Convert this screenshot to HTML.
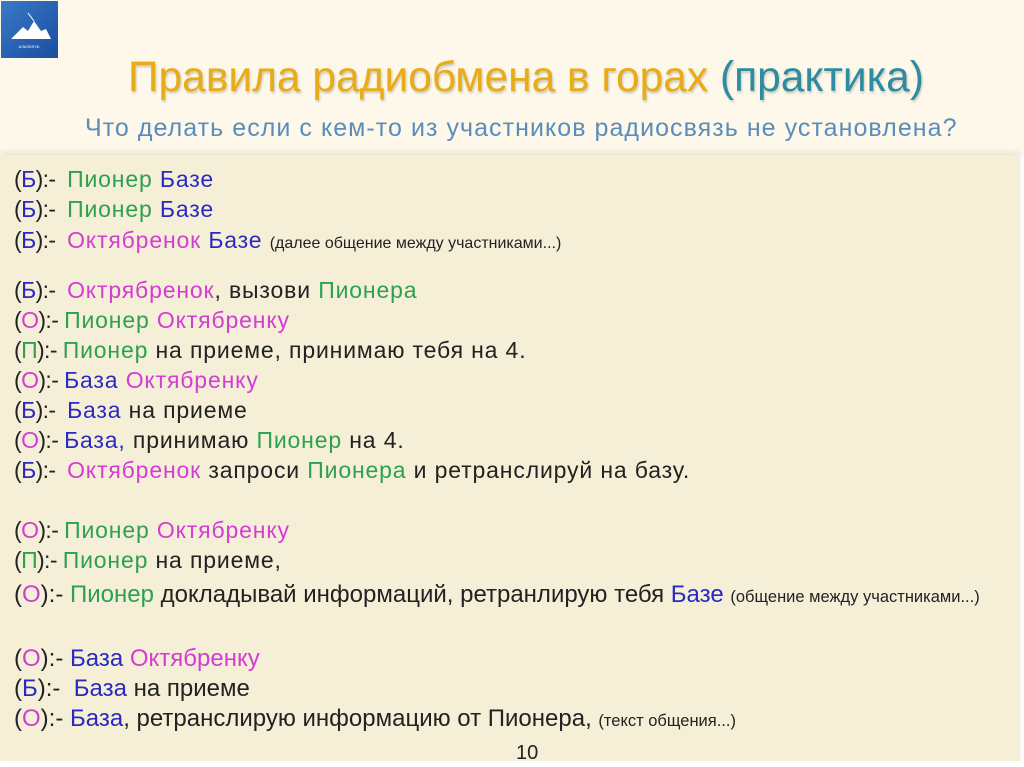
<!DOCTYPE html>
<html><head><meta charset="utf-8"><style>
body{margin:0;width:1024px;height:767px;overflow:hidden;background:#fff;font-family:"Liberation Sans",sans-serif;position:relative}
.top{position:absolute;left:0;top:0;width:1024px;height:155px;background:#fdf8e9}
.main{position:absolute;left:0;top:155px;width:1020px;height:606px;background:#f5efd8;box-shadow:0 -3px 6px rgba(0,0,0,0.08)}
.logo{position:absolute;left:1px;top:1px;width:57px;height:57px;background:linear-gradient(135deg,#3a78c8,#1a4ea0)}
.t{position:absolute;left:128px;top:54px;font-size:42.5px;color:#e8ac18;white-space:nowrap;text-shadow:1px 2px 2px rgba(0,0,0,0.2)}
.t span{color:#2e8ca0}
.s{position:absolute;left:85px;top:114px;font-size:25px;letter-spacing:1.05px;color:#5a8cbc;white-space:nowrap}
.l{position:absolute;left:14px;font-size:23px;letter-spacing:0.85px;color:#222;white-space:nowrap;line-height:26px}
.n{font-size:16px;letter-spacing:0}
.p{letter-spacing:-0.6px}
.B{color:#2a2ac0}.O{color:#d43cd4}.P{color:#2ea050}
.c{font-size:24px;letter-spacing:0}
.c .n{font-size:16.5px}
</style></head><body>
<div class="top"></div>
<div class="main"></div>
<div class="logo"><svg width="57" height="57"><path d="M10 38 L22 26 L27 30 L33 20 L40 30 L45 28 L50 38 Z" fill="#fff"/><path d="M27 12 L33 20" stroke="#fff" stroke-width="1"/><text x="28" y="47" font-size="4" fill="#fff" text-anchor="middle" font-family="Liberation Sans">АЛЬПКЛУБ</text></svg></div>
<div class="t">Правила радиобмена в горах <span>(практика)</span></div>
<div class="s">Что делать если с кем-то из участников радиосвязь не установлена?</div>
<div class="l" style="top:166px"><span class="p">(<span class="B">Б</span>):-&nbsp; </span><span class="P">Пионер</span> <span class="B">Базе</span></div>
<div class="l" style="top:196px"><span class="p">(<span class="B">Б</span>):-&nbsp; </span><span class="P">Пионер</span> <span class="B">Базе</span></div>
<div class="l" style="top:227px"><span class="p">(<span class="B">Б</span>):-&nbsp; </span><span class="O">Октябренок</span> <span class="B">Базе</span> <span class="n">(далее общение между участниками...)</span></div>
<div class="l" style="top:277px"><span class="p">(<span class="B">Б</span>):-&nbsp; </span><span class="O">Октрябренок</span>, вызови <span class="P">Пионера</span></div>
<div class="l" style="top:307px"><span class="p">(<span class="O">О</span>):- </span><span class="P">Пионер</span> <span class="O">Октябренку</span></div>
<div class="l" style="top:337px"><span class="p">(<span class="P">П</span>):- </span><span class="P">Пионер</span> на приеме, принимаю тебя на 4.</div>
<div class="l" style="top:367px"><span class="p">(<span class="O">О</span>):- </span><span class="B">База</span> <span class="O">Октябренку</span></div>
<div class="l" style="top:397px"><span class="p">(<span class="B">Б</span>):-&nbsp; </span><span class="B">База</span> на приеме</div>
<div class="l" style="top:427px"><span class="p">(<span class="O">О</span>):- </span><span class="B">База,</span> принимаю <span class="P">Пионер</span> на 4.</div>
<div class="l" style="top:457px"><span class="p">(<span class="B">Б</span>):-&nbsp; </span><span class="O">Октябренок</span> запроси <span class="P">Пионера</span> и ретранслируй на базу.</div>
<div class="l" style="top:517px"><span class="p">(<span class="O">О</span>):- </span><span class="P">Пионер</span> <span class="O">Октябренку</span></div>
<div class="l" style="top:547px"><span class="p">(<span class="P">П</span>):- </span><span class="P">Пионер</span> на приеме,</div>
<div class="l c" style="top:582px">(<span class="O">О</span>):- <span class="P">Пионер</span> докладывай информаций, ретранлирую тебя <span class="B">Базе</span> <span class="n">(общение между участниками...)</span></div>
<div class="l c" style="top:646px">(<span class="O">О</span>):- <span class="B">База</span> <span class="O">Октябренку</span></div>
<div class="l c" style="top:676px">(<span class="B">Б</span>):-&nbsp; <span class="B">База</span> на приеме</div>
<div class="l c" style="top:706px">(<span class="O">О</span>):- <span class="B">База</span>, ретранслирую информацию от Пионера, <span class="n">(текст общения...)</span></div>
<div class="l" style="top:740px;left:516px;font-size:20px;letter-spacing:0">10</div>
</body></html>
